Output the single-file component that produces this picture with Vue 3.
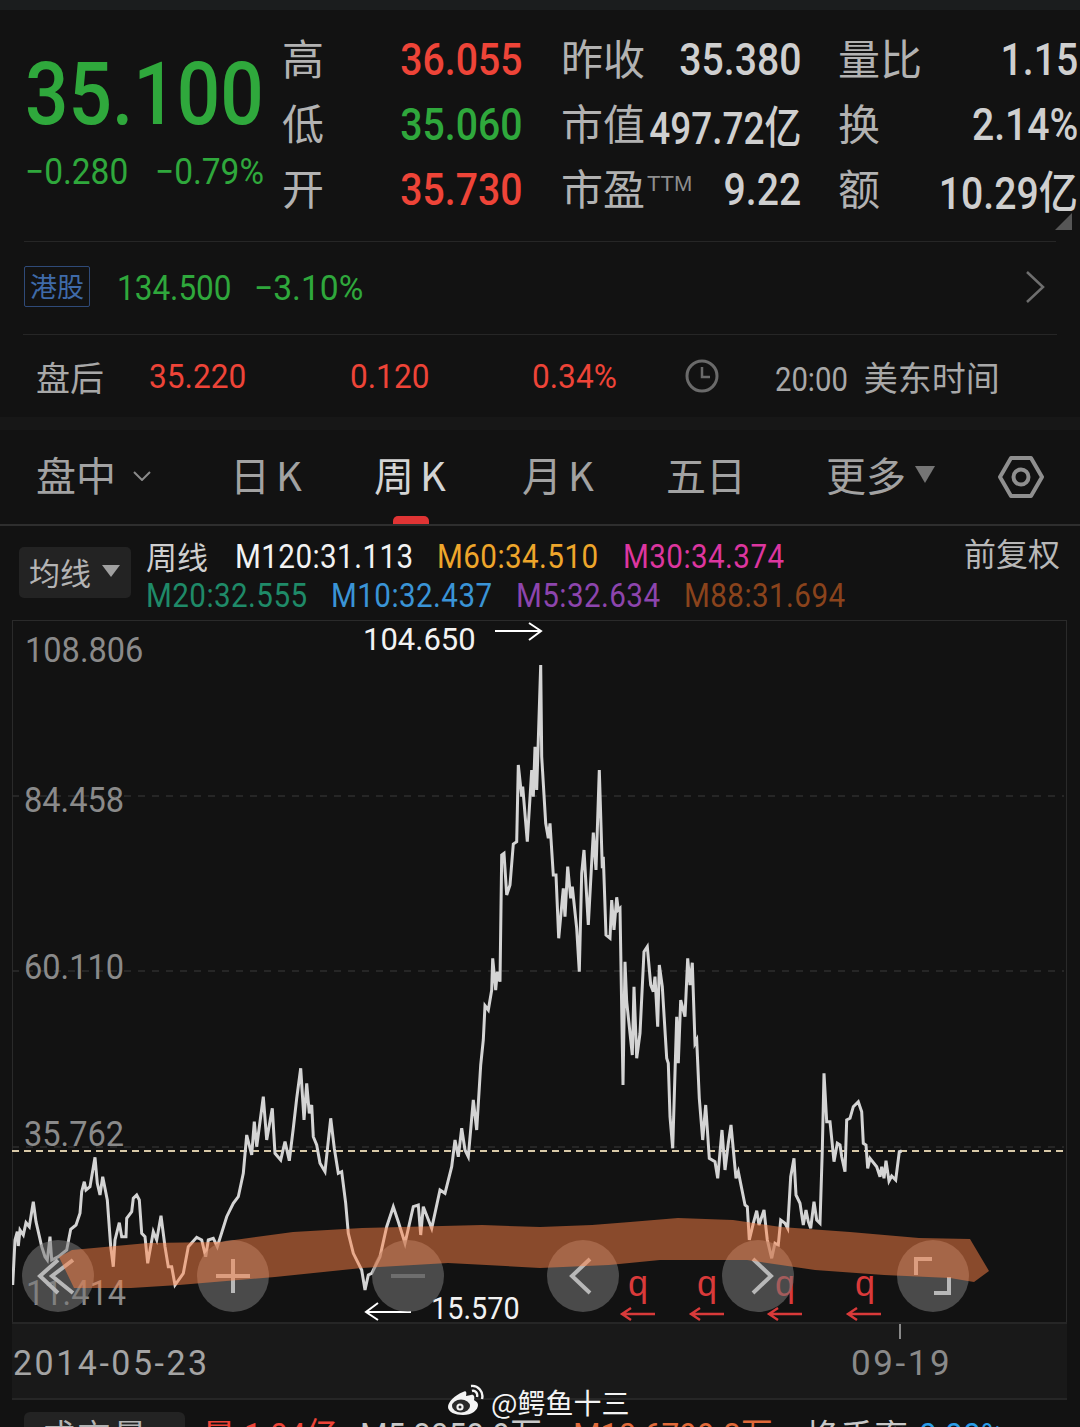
<template>
  <div class="page">
    <div class="topbar"></div>

    <!-- 报价 -->
    <section class="quote">
      <div class="price-box">
        <div class="price num">35.100</div>
        <div class="change">
          <span class="num">−0.280</span>
          <span class="num">−0.79%</span>
        </div>
      </div>
      <div class="stats">
        <template v-for="row in stats" :key="row[0].label">
          <div v-for="cell in row" :key="cell.label" class="stat">
            <span class="stat-label">{{ cell.label }}<sup v-if="cell.sup">{{ cell.sup }}</sup></span>
            <span class="stat-value num" :class="[cell.tone, { tight: cell.tight }]">{{ cell.value }}</span>
          </div>
        </template>
      </div>
      <span class="corner"></span>
    </section>

    <div class="hk-row">
      <span class="hk-tag">港股</span>
      <span class="hk-price num">134.500</span>
      <span class="hk-change num">−3.10%</span>
      <svg class="chevron" width="20" height="32" viewBox="0 0 20 32">
        <path d="M2 1 L18 16 L2 31" fill="none" stroke="#6e6e6e" stroke-width="2.5" />
      </svg>
    </div>

    <div class="after-row">
      <span class="after-label">盘后</span>
      <span class="after-num num">35.220</span>
      <span class="after-num num">0.120</span>
      <span class="after-num num">0.34%</span>
      <svg width="34" height="34" viewBox="0 0 34 34">
        <circle cx="17" cy="17" r="15" fill="none" stroke="#6a6a6a" stroke-width="3" />
        <path d="M17 8 V18 H25" fill="none" stroke="#6a6a6a" stroke-width="2.5" />
      </svg>
      <span class="after-time"><span class="num">20:00</span><span>美东时间</span></span>
    </div>
    <div class="band"></div>

    <!-- 周期切换 -->
    <nav class="tabs">
      <div v-for="tab in tabs" :key="tab.name" class="tab" :class="{ active: tab.active, latin: tab.name.endsWith('K') }">
        <span>{{ tab.name }}</span>
        <svg v-if="tab.caret === 'line'" class="caret-line" width="18" height="10" viewBox="0 0 18 10">
          <path d="M1 1 L9 9 L17 1" fill="none" stroke="#8a8a8a" stroke-width="2" />
        </svg>
        <span v-if="tab.caret === 'solid'" class="caret-solid"></span>
      </div>
      <svg class="gear" width="46" height="42" viewBox="0 0 46 42">
        <path d="M13 2 H33 L44 21 L33 40 H13 L2 21 Z" fill="none" stroke="#8f8f8f" stroke-width="4" stroke-linejoin="round" />
        <circle cx="23" cy="21" r="7.5" fill="none" stroke="#8f8f8f" stroke-width="4" />
      </svg>
    </nav>

    <!-- 均线 -->
    <div class="legend-row">
      <div class="ma-select">
        <span>均线</span>
        <span class="ma-caret"></span>
      </div>
      <div class="legend">
        <div class="legend-line top">
          <span class="legend-title">周线</span>
          <span v-for="m in legendTop" :key="m.text" class="num" :style="{ color: m.color }">{{ m.text }}</span>
        </div>
        <div class="legend-line bottom">
          <span v-for="m in legendBottom" :key="m.text" class="num" :style="{ color: m.color }">{{ m.text }}</span>
        </div>
      </div>
      <span class="adjust">前复权</span>
    </div>

    <!-- K线图 -->
    <div class="chart">
      <svg class="chart-svg" width="1055" height="702" viewBox="12 620 1055 702">
        <line v-for="y in gridLines" :key="y" x1="12" x2="1064" :y1="y" :y2="y" stroke="#2e2e2e" stroke-width="1.5" stroke-dasharray="7 7" />
        <line x1="12" x2="1064" y1="1151" y2="1151" stroke="#d8c9a8" stroke-width="2" stroke-dasharray="7 5" />
        <polyline :points="linePoints" fill="none" stroke="#d4d4d4" stroke-width="3" stroke-linejoin="miter" />
        <path d="M495 631 H541 M529 623 L541 631 L529 640" fill="none" stroke="#fff" stroke-width="2" />
        <path d="M411 1312 H366 M378 1303 L366 1312 L378 1320" fill="none" stroke="#fff" stroke-width="2" />
        <path v-for="x in redArrows" :key="x" :d="`M${x + 34} 1314 H${x + 1} M${x + 10} 1308 L${x + 1} 1314 L${x + 10} 1320`" fill="none" stroke="#d93a3a" stroke-width="2.4" />
      </svg>

      <span v-for="a in axisLabels" :key="a.text" class="axis-label num" :style="{ top: a.top + 'px', left: a.left + 'px' }">{{ a.text }}</span>
      <span class="note num note-high">104.650</span>
      <span class="note num note-low">15.570</span>
      <span v-for="q in redMarks" :key="q" class="red-q" :style="{ left: q + 'px' }">q</span>

      <button v-for="b in buttons" :key="b.name" class="round-btn" :style="{ left: b.left + 'px' }">
        <svg width="72" height="72" viewBox="0 0 72 72">
          <path :d="b.d" fill="none" :stroke="b.off ? '#6e6e6e' : '#b8b8b8'" stroke-width="4" />
        </svg>
      </button>
    </div>

    <div class="axis">
      <span class="axis-date num">2014-05-23</span>
      <span class="axis-tick"></span>
      <span class="axis-end num">09-19</span>
    </div>

    <div class="volume-row">
      <div class="vol-tab">成交量</div>
      <span class="red">量</span>
      <span class="num red">1.04亿</span>
      <span class="num vol-ma">M5:8058.9万</span>
      <span class="num vol-orange">M10:6799.3万</span>
      <span class="vol-rate">换手率</span>
      <span class="num vol-blue">0.00%</span>
    </div>

    <!-- 手绘标记 -->
    <svg class="paint" width="1080" height="1427" viewBox="0 0 1080 1427">
      <path :d="paintPath" fill="rgba(255, 130, 70, 0.5)" />
    </svg>

    <div class="watermark">
      <svg width="38" height="31" viewBox="0 0 38 31">
        <path d="M16 8 C8 11 1 18 1 23 C1 28 8 31 16 31 C25 31 31 26 31 21 C31 18 28 17 27 16 C28 13 27 10 24 11 L19 12 C20 8 19 6 16 8 Z" fill="#f4f4f4" />
        <ellipse cx="14" cy="22" rx="9" ry="6.5" fill="#2a2a2a" />
        <circle cx="13" cy="23" r="3.6" fill="#f4f4f4" />
        <circle cx="13" cy="23" r="1.5" fill="#2a2a2a" />
        <path d="M24 2 C31 1 37 8 35 15 M25 7 C28 6 31 9 30 13" fill="none" stroke="#f4f4f4" stroke-width="2.4" />
      </svg>
      <span>@鳄鱼十三</span>
    </div>
  </div>
</template>

<script setup>
const stats = [
  [
    { label: '高', value: '36.055', tone: 'red' },
    { label: '昨收', value: '35.380' },
    { label: '量比', value: '1.15' }
  ],
  [
    { label: '低', value: '35.060', tone: 'green' },
    { label: '市值', value: '497.72亿', tight: true },
    { label: '换', value: '2.14%' }
  ],
  [
    { label: '开', value: '35.730', tone: 'red' },
    { label: '市盈', sup: 'TTM', value: '9.22' },
    { label: '额', value: '10.29亿' }
  ]
]

const tabs = [
  { name: '盘中', caret: 'line' },
  { name: '日K' },
  { name: '周K', active: true },
  { name: '月K' },
  { name: '五日' },
  { name: '更多', caret: 'solid' }
]

const legendTop = [
  { text: 'M120:31.113', color: '#f2f2f2' },
  { text: 'M60:34.510', color: '#eea62b' },
  { text: 'M30:34.374', color: '#dd369f' }
]
const legendBottom = [
  { text: 'M20:32.555', color: '#1f8a68' },
  { text: 'M10:32.437', color: '#3a94d6' },
  { text: 'M5:32.634', color: '#8d45ad' },
  { text: 'M88:31.694', color: '#8a431c' }
]

const gridLines = [796, 971, 1147]

const axisLabels = [
  { text: '108.806', top: 11, left: 13 },
  { text: '84.458', top: 161, left: 12 },
  { text: '60.110', top: 328, left: 12 },
  { text: '35.762', top: 495, left: 12 },
  { text: '11.414', top: 654, left: 14 }
]

// 相对图表左边缘 (x - 12)
const redMarks = [616, 685, 763, 843]
const redArrows = [621, 690, 768, 847]

const buttons = [
  { name: 'first', left: 10, d: 'M36 20 L18 36 L36 53 M51 20 L30 36 L51 53' },
  { name: 'plus', left: 185, d: 'M19 36 H53 M36 19 V53' },
  { name: 'minus', left: 360, d: 'M19 36 H53', off: true },
  { name: 'prev', left: 535, d: 'M43 19 L25 36 L43 53' },
  { name: 'next', left: 710, d: 'M31 19 L49 36 L31 53' },
  { name: 'full', left: 885, d: 'M19 35 V19 H35 M52 37 V53 H37' }
]

// 收盘价折线，按 3 倍放大的截图取点
const scaled = (pts, ox, oy) => pts.map(([x, y]) => [ox + x / 3, oy + y / 3])

const leftPart = scaled([
  [38, 735], [45, 600], [52, 575], [55, 618], [60, 570], [70, 585], [78, 548], [88, 560], [100, 485], [108, 545],
  [125, 620], [135, 650], [142, 660], [150, 590], [155, 660], [175, 650], [200, 630], [212, 568], [228, 555], [240, 520],
  [245, 455], [253, 425], [258, 450], [270, 440], [285, 352], [292, 430], [300, 465], [308, 410], [322, 480], [332, 620],
  [340, 680], [345, 600], [358, 548], [365, 590], [378, 590], [380, 535], [395, 515], [400, 475], [410, 465], [418, 480],
  [425, 580], [435, 590], [443, 670], [460, 575], [470, 600], [483, 527], [495, 620], [505, 680], [515, 680], [525, 735],
  [550, 700], [565, 620], [590, 592], [605, 600], [617, 650], [625, 600], [640, 595], [652, 620], [680, 530], [700, 490],
  [715, 470], [730, 400], [740, 285], [755, 345], [763, 245], [770, 320], [790, 170], [800, 300], [817, 205], [825, 340],
  [842, 360], [855, 305], [868, 362], [880, 265], [890, 175], [902, 85], [912, 240], [920, 130], [928, 220], [935, 195],
  [940, 290], [950, 315], [960, 370], [975, 395], [992, 235], [1003, 325], [1015, 400], [1025, 395], [1037, 490], [1045, 580],
  [1060, 640], [1085, 690], [1095, 750], [1105, 705], [1115, 700], [1140, 650], [1160, 560], [1180, 500], [1195, 545], [1215, 610],
  [1240, 500], [1255, 495], [1262, 585], [1270, 500], [1295, 565], [1320, 450], [1335, 460], [1355, 380], [1365, 300], [1375, 350],
  [1385, 265], [1395, 330], [1405, 350], [1420, 180], [1430, 270]
], 0, 1040)

const peakPart = scaled([
  [122, 1275], [130, 1200], [135, 1097], [145, 1110], [155, 1050], [158, 955], [167, 1050], [172, 995], [180, 1025], [185, 645],
  [192, 640], [200, 765], [210, 735], [220, 612], [230, 605], [235, 375], [245, 470], [248, 440], [262, 605], [275, 390],
  [280, 470], [285, 320], [290, 450], [302, 75], [305, 350], [317, 550], [325, 595], [330, 550], [340, 705], [348, 705],
  [356, 895], [370, 745], [375, 830], [383, 680], [392, 775], [397, 740], [410, 865], [418, 995], [425, 700], [432, 630],
  [445, 855], [460, 578], [468, 690], [478, 390], [487, 685], [490, 650], [498, 885], [510, 895], [515, 780], [522, 870],
  [530, 772], [535, 810], [540, 805], [549, 1335], [555, 965], [560, 1085], [577, 1245], [582, 1040], [590, 1255], [600, 1180],
  [612, 935], [622, 920], [632, 1035], [640, 1055], [645, 1010], [653, 1160], [658, 975], [667, 1040], [680, 1255], [685, 1270]
], 440, 640)

const valley = scaled([[30, 230], [38, 325]], 660, 1040)

const secondPeak = scaled([
  [710, 1130], [715, 1270], [722, 1080], [735, 1130], [743, 955], [750, 1035], [757, 968], [765, 1210], [770, 1200]
], 440, 640)

const rightPart = scaled([
  [118, 175], [128, 300], [137, 195], [148, 355], [165, 365], [173, 415], [186, 270], [195, 390], [205, 310], [213, 255],
  [228, 415], [235, 395], [255, 495], [262, 500], [268, 600], [280, 550], [290, 512], [297, 555], [312, 510], [322, 600],
  [335, 655], [345, 610], [355, 615], [362, 540], [375, 550], [383, 565], [392, 410], [402, 355], [408, 465], [420, 490],
  [430, 555], [438, 510], [445, 545], [452, 565], [462, 485], [470, 540], [480, 550], [487, 330], [492, 100], [500, 245],
  [510, 245], [522, 365], [532, 310], [540, 315], [545, 350], [555, 395], [560, 240], [570, 235], [580, 200], [595, 185],
  [605, 215], [610, 310], [618, 315], [623, 385], [630, 355], [650, 380], [660, 410], [665, 380], [672, 415], [678, 362],
  [687, 423], [695, 408], [707, 420], [718, 335], [725, 333]
], 660, 1040)

const linePoints = [...leftPart, ...peakPart, ...valley, ...secondPeak, ...rightPart]
  .map(([x, y]) => `${x.toFixed(1)},${y.toFixed(1)}`)
  .join(' ')

const paintEdge = [
  [59, 1257], [72, 1250], [148, 1243], [220, 1242], [293, 1232], [362, 1228], [482, 1225], [540, 1227], [592, 1225], [630, 1222],
  [678, 1218], [733, 1220], [781, 1227], [850, 1232], [919, 1238], [970, 1239], [989, 1271], [974, 1282], [950, 1278], [884, 1275],
  [815, 1270], [747, 1260], [660, 1260], [609, 1265], [540, 1268], [448, 1263], [362, 1268], [275, 1277], [179, 1285], [131, 1288], [74, 1288]
]
const paintPath = 'M' + paintEdge.map((p) => p.join(' ')).join(' L') + ' Z'
</script>

<style scoped>
.page {
  position: relative;
  width: 1080px;
  height: 1427px;
  overflow: hidden;
  background: #121212;
  color: #c8c8c8;
  font-family: "Noto Sans CJK SC", sans-serif;
}

/* 数字字体偏窄，Roboto 横向压缩 */
.num {
  display: inline-block;
  font-family: Roboto, "Noto Sans CJK SC", sans-serif;
  white-space: nowrap;
  transform: scaleX(var(--sx, 1));
  transform-origin: left center;
}

.red { color: #ee4438; }
.green { color: #2fa83c; }

.topbar {
  height: 10px;
  background: #1b1d1e;
}

/* 报价 */
.quote {
  position: relative;
  display: flex;
  height: 231px;
  padding: 17px 0 0 25px;
  box-sizing: border-box;
}

.price-box {
  width: 257px;
  flex: none;
}

.price {
  --sx: 0.88;
  margin-top: 19px;
  color: #2fa83c;
  font-size: 87px;
  font-weight: 500;
  line-height: 96px;
}

.change {
  display: flex;
  gap: 19px;
  margin-top: 10px;
  color: #2fa83c;
  font-size: 36px;
  line-height: 40px;
}

.change .num { --sx: 0.93; }

.stats {
  display: grid;
  grid-template-columns: 240px 279px 277px;
  grid-auto-rows: 65px;
}

.stat {
  display: flex;
  justify-content: space-between;
  align-items: center;
}

.stat:nth-child(3n + 2) { padding-left: 39px; }
.stat:nth-child(3n) { padding-left: 37px; }

.stat-label {
  margin-bottom: 7px;
  color: #b2b2b2;
  font-size: 42px;
  line-height: 65px;
  white-space: nowrap;
}

.stat-label sup {
  margin-left: 2px;
  color: #8e8e8e;
  font-size: 22px;
  line-height: 1;
  vertical-align: 14px;
  font-family: "Liberation Sans", sans-serif;
}

.stat-value {
  --sx: 0.87;
  margin-left: -60px;
  color: #cfcfcf;
  font-size: 45px;
  font-weight: 500;
  transform-origin: right center;
}

.stat-value.tight { --sx: 0.82; }
.stat-value.red { color: #ee4438; }
.stat-value.green { color: #2fa83c; }

.corner {
  position: absolute;
  right: 8px;
  bottom: 11px;
  border-left: 17px solid transparent;
  border-bottom: 17px solid #565656;
}

.hk-row {
  display: flex;
  align-items: center;
  height: 93px;
  margin: 0 24px;
  border-top: 1px solid #262626;
  box-sizing: border-box;
}

.hk-tag {
  width: 66px;
  height: 41px;
  margin-top: -3px;
  border: 1px solid #2f4a78;
  border-radius: 2px;
  box-sizing: border-box;
  color: #3f6aa8;
  font-size: 27px;
  line-height: 38px;
  text-align: center;
}

.hk-price,
.hk-change {
  color: #2fa83c;
  font-size: 35px;
}

.hk-price { --sx: 0.9; margin-left: 27px; }
.hk-change { --sx: 0.96; margin-left: 10px; }

.chevron { margin: -3px 11px 0 auto; }

.after-row {
  display: grid;
  grid-template-columns: 113px 201px 182px 153px 90px auto;
  align-items: center;
  height: 83px;
  margin: 0 23px;
  padding-left: 13px;
  border-top: 1px solid #262626;
  box-sizing: border-box;
}

.after-label {
  color: #a8a8a8;
  font-size: 34px;
}

.after-num {
  --sx: 0.93;
  color: #ee4438;
  font-size: 34px;
}

.after-time {
  display: flex;
  align-items: baseline;
  gap: 4px;
  color: #a8a8a8;
  font-size: 34px;
  white-space: nowrap;
}

.after-time .num { --sx: 0.86; }

.band {
  height: 13px;
  background: #171717;
}

/* 周期切换 */
.tabs {
  position: relative;
  display: grid;
  grid-template-columns: 194px 144px 148px 144px 160px 172px auto;
  align-items: center;
  height: 96px;
  padding-left: 36px;
  border-bottom: 2px solid #2e2e2e;
  box-sizing: border-box;
}

.tab {
  position: relative;
  display: flex;
  align-items: center;
  height: 100%;
  padding-bottom: 6px;
  box-sizing: border-box;
  color: #a2a2a2;
  font-size: 40px;
}

.tab.latin { letter-spacing: 6px; }

.tab.active {
  color: #d4d4d4;
}

.tab.active::after {
  content: '';
  position: absolute;
  left: 19px;
  bottom: 0;
  width: 36px;
  height: 8px;
  border-radius: 5px 5px 0 0;
  background: #e03434;
}

.caret-line { margin-left: 17px; margin-top: 4px; }

.caret-solid {
  margin-left: 9px;
  border-top: 17px solid #757575;
  border-left: 10px solid transparent;
  border-right: 10px solid transparent;
}

/* 均线 */
.legend-row {
  display: flex;
  height: 94px;
  padding-left: 19px;
  box-sizing: border-box;
}

.ma-select {
  display: flex;
  align-items: center;
  width: 112px;
  height: 51px;
  margin-top: 21px;
  padding: 0 0 3px 10px;
  border-radius: 5px;
  background: #232323;
  box-sizing: border-box;
  color: #b4b4b4;
  font-size: 31px;
}

.ma-caret {
  margin-left: 11px;
  border-top: 12px solid #a0a0a0;
  border-left: 9px solid transparent;
  border-right: 9px solid transparent;
}

.legend {
  margin-left: 15px;
  padding-top: 7px;
}

.legend-line {
  display: grid;
  height: 41px;
  align-items: center;
  font-size: 34px;
  letter-spacing: 0.5px;
  white-space: nowrap;
}

.legend-line.top { grid-template-columns: 89px 202px 186px auto; }
.legend-line.bottom { grid-template-columns: 185px 185px 168px auto; }
.legend-line .num { --sx: 0.87; }

.legend-title {
  color: #cfcfcf;
  font-size: 31px;
  letter-spacing: 0;
}

.adjust {
  margin: 3px 20px 0 auto;
  color: #b8b8b8;
  font-size: 32px;
  line-height: 46px;
}

/* K线图 */
.chart {
  position: relative;
  width: 1055px;
  height: 702px;
  margin-left: 12px;
  box-shadow: inset 0 1px 0 #2a2a2a, inset 1px 0 0 #2a2a2a, inset -1px 0 0 #2a2a2a;
}

.chart-svg {
  position: absolute;
  left: 0;
  top: 0;
}

.axis-label {
  --sx: 0.93;
  position: absolute;
  color: #8a8a8a;
  font-size: 35px;
  line-height: 40px;
}

.note {
  position: absolute;
  color: #f2f2f2;
  font-family: Roboto, sans-serif;
  font-size: 31px;
  line-height: 36px;
}

.note-high { left: 351px; top: 2px; }
.note-low { --sx: 0.93; left: 419px; top: 671px; }

.red-q {
  position: absolute;
  top: 644px;
  color: #d93a3a;
  font-family: "Liberation Sans", sans-serif;
  font-size: 36px;
  line-height: 40px;
}

.round-btn {
  position: absolute;
  top: 620px;
  width: 72px;
  height: 72px;
  padding: 0;
  border: none;
  border-radius: 50%;
  background: rgba(120, 120, 120, 0.55);
}

.axis {
  position: relative;
  height: 78px;
  margin: 0 13px 0 12px;
  border-top: 2px solid #262626;
  border-bottom: 2px solid #262626;
  background: #191919;
  box-sizing: border-box;
}

.axis-date {
  --sx: 0.97;
  position: absolute;
  left: 1px;
  top: 20px;
  color: #a4a4a4;
  font-size: 35px;
  line-height: 40px;
  letter-spacing: 2.6px;
}

.axis-tick {
  position: absolute;
  left: 887px;
  top: 0;
  width: 2px;
  height: 15px;
  background: #8a8a8a;
}

.axis-end {
  position: absolute;
  left: 839px;
  top: 20px;
  color: #8a8a8a;
  font-size: 35px;
  line-height: 40px;
  letter-spacing: 2.6px;
}

.volume-row {
  display: grid;
  grid-template-columns: 178px 42px 116px 213px 233px 113px auto;
  align-items: start;
  padding: 12px 0 0 24px;
  font-size: 34px;
  line-height: 46px;
  white-space: nowrap;
}

.volume-row .num { --sx: 0.93; }

.vol-tab {
  width: 161px;
  height: 60px;
  padding-left: 17px;
  border-radius: 6px;
  background: #232323;
  box-sizing: border-box;
  color: #b4b4b4;
  letter-spacing: 2px;
}

.vol-ma { color: #c8c8c8; }
.vol-orange { color: #e06a3a; }
.vol-rate { color: #c8c8c8; }
.vol-blue { color: #2a9de8; }

.paint {
  position: absolute;
  left: 0;
  top: 0;
  pointer-events: none;
}

.watermark {
  position: absolute;
  left: 447px;
  top: 1384px;
  display: flex;
  gap: 6px;
  color: #f4f4f4;
  font-size: 28px;
  line-height: 36px;
}
</style>

<style>
body {
  background: #121212;
}
</style>
